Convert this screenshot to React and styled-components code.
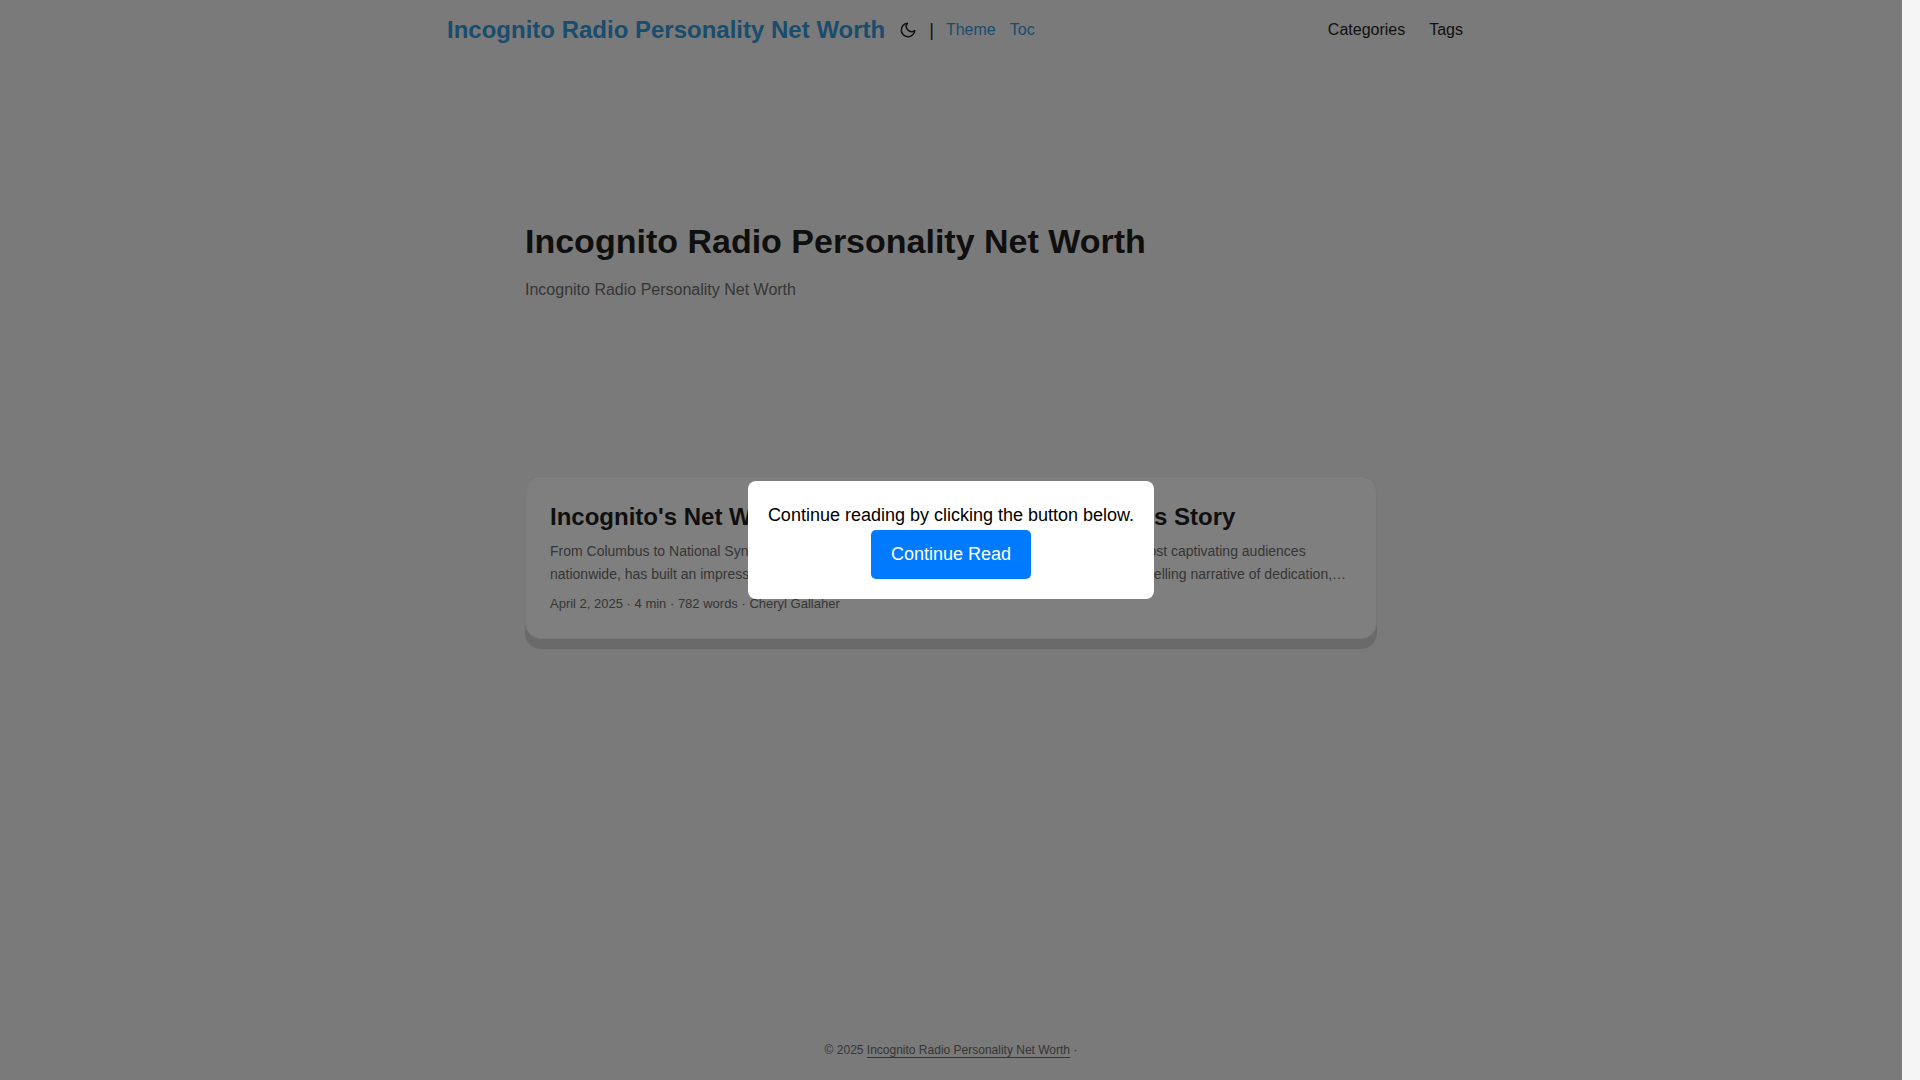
import React from 'react';
import styled, { createGlobalStyle } from 'styled-components';

const GlobalStyle = createGlobalStyle`
  *, *::before, *::after { box-sizing: border-box; }
  html { background: #f5f5f5; overflow: hidden; }
  body {
    margin: 0;
    color: #1e1e1e;
    font-family: "Liberation Sans", Arial, sans-serif;
    font-size: 18px;
    line-height: 1.6;
  }
  h1, h2, p, ul { margin: 0; padding: 0; }
  a { color: inherit; text-decoration: none; }
`;

const Page = styled.div`
  display: flex;
  flex-direction: column;
  min-height: 100vh;
  margin-right: 18px;
`;

const Nav = styled.nav`
  display: flex;
  justify-content: space-between;
  width: 100%;
  max-width: 1072px;
  margin: 0 auto;
  padding: 0 24px;
  line-height: 60px;
`;

const Brand = styled.div`
  display: flex;
  align-items: center;
  padding-left: 8px;
`;

const BrandLink = styled.a`
  color: #3498db;
  font-size: 24px;
  font-weight: 700;
`;

const ThemeToggle = styled.button`
  display: flex;
  margin: 0 12px 0 14px;
  padding: 0;
  border: 0;
  background: none;
  color: #1e1e1e;
`;

const BrandItem = styled.a`
  margin-left: ${({ $gap }) => $gap}px;
  color: #3498db;
  font-size: 16px;
`;

const Menu = styled.ul`
  display: flex;
  gap: 24px;
  list-style: none;
  font-size: 16px;
`;

const Main = styled.main`
  flex: 1;
  width: 100%;
  max-width: 900px;
  margin: 0 auto;
  padding: 24px;
`;

const Intro = styled.header`
  display: flex;
  flex-direction: column;
  justify-content: center;
  gap: 14px;
  min-height: 320px;
  margin: 17px 0 55px;
`;

const Title = styled.h1`
  font-size: 34px;
  line-height: 44px;
`;

const Lead = styled.p`
  color: #6c6c6c;
  font-size: 16px;
  line-height: 26px;
`;

const Card = styled.article`
  padding: 24px;
  border: 1px solid #eee;
  border-radius: 16px;
  background: #fff;
  box-shadow: 0 10px #d4d4d4;
`;

const CardTitle = styled.h2`
  font-size: 24px;
  line-height: 31px;
`;

const Summary = styled.p`
  display: -webkit-box;
  margin: 8px 0;
  overflow: hidden;
  color: #6c6c6c;
  font-size: 14px;
  line-height: 23px;
  -webkit-box-orient: vertical;
  -webkit-line-clamp: 2;
`;

const Meta = styled.footer`
  color: #6c6c6c;
  font-size: 13px;
  line-height: 20px;
`;

const Footer = styled.footer`
  padding: 18px 24px;
  color: #6c6c6c;
  font-size: 12px;
  line-height: 24px;
  text-align: center;

  a { border-bottom: 1px solid #6c6c6c; }
`;

const Overlay = styled.div`
  position: fixed;
  inset: 0 18px 0 0;
  display: flex;
  align-items: center;
  justify-content: center;
  background: rgba(0, 0, 0, 0.5);
`;

const Dialog = styled.div`
  display: flex;
  flex-direction: column;
  align-items: center;
  padding: 20px;
  border-radius: 8px;
  background: #fff;
  text-align: center;
`;

const DialogText = styled.p`
  color: #000;
  font-size: 18px;
  line-height: 29px;
`;

const ContinueButton = styled.button`
  padding: 10px 20px;
  border: 0;
  border-radius: 5px;
  background: #007bff;
  color: #fff;
  font: 18px/29px "Liberation Sans", Arial, sans-serif;
`;

const MoonIcon = () => (
  <svg
    width="18"
    height="18"
    viewBox="0 0 24 24"
    fill="none"
    stroke="currentColor"
    strokeWidth="2"
    strokeLinecap="round"
    strokeLinejoin="round"
    aria-hidden="true"
  >
    <path d="M21 12.79A9 9 0 1 1 11.21 3 7 7 0 0 0 21 12.79z" />
  </svg>
);

const SITE = 'Incognito Radio Personality Net Worth';

export default function App() {
  return (
    <>
      <GlobalStyle />
      <Page>
        <Nav>
          <Brand>
            <BrandLink href="#">{SITE}</BrandLink>
            <ThemeToggle type="button" aria-label="Toggle theme">
              <MoonIcon />
            </ThemeToggle>
            <span>|</span>
            <BrandItem href="#theme" $gap={12}>Theme</BrandItem>
            <BrandItem href="#toc" $gap={14}>Toc</BrandItem>
          </Brand>
          <Menu>
            <li><a href="#categories">Categories</a></li>
            <li><a href="#tags">Tags</a></li>
          </Menu>
        </Nav>
        <Main>
          <Intro>
            <Title>{SITE}</Title>
            <Lead>{SITE}</Lead>
          </Intro>
          <Card>
            <CardTitle>Incognito's Net Worth - A Radio Personality's Success Story</CardTitle>
            <Summary>
              From Columbus to National Syndication: Incognito, the charming radio personality and podcast host
              captivating audiences nationwide, has built an impressive career and a substantial net worth. His
              journey is a truly compelling narrative of dedication, perseverance and talent.
            </Summary>
            <Meta>April 2, 2025 · 4 min · 782 words · Cheryl Gallaher</Meta>
          </Card>
        </Main>
        <Footer>
          © 2025 <a href="#">{SITE}</a> ·
        </Footer>
      </Page>
      <Overlay>
        <Dialog role="dialog" aria-modal="true" aria-labelledby="continue-text">
          <DialogText id="continue-text">Continue reading by clicking the button below.</DialogText>
          <ContinueButton type="button">Continue Read</ContinueButton>
        </Dialog>
      </Overlay>
    </>
  );
}
